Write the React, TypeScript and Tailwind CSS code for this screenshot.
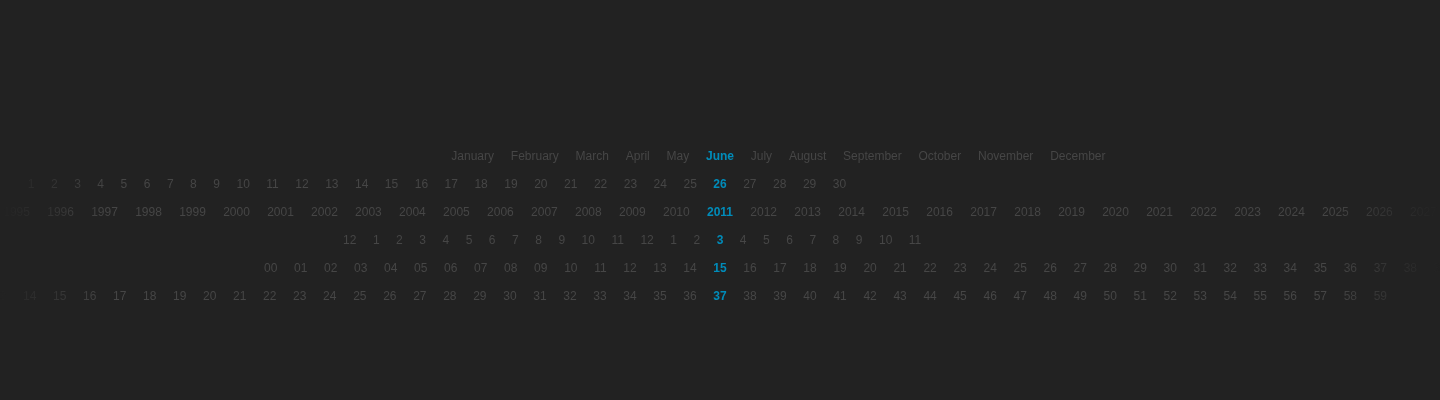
import React from "react";

type Row = { before: string[]; active: string; after: string[]; pad: string };

const pad = (n: number) => (n < 10 ? "0" + n : String(n));
const range = (a: number, b: number) => {
  const r: number[] = [];
  for (let i = a; i <= b; i++) r.push(i);
  return r;
};

const months = [
  "January",
  "February",
  "March",
  "April",
  "May",
  "June",
  "July",
  "August",
  "September",
  "October",
  "November",
  "December",
];

const hours = [12, ...range(1, 11), 12, ...range(1, 11)].map(String);

const rows: Row[] = [
  { before: months.slice(0, 5), active: "June", after: months.slice(6), pad: "px-[8.4px]" },
  {
    before: range(1, 25).map(String),
    active: "26",
    after: range(27, 30).map(String),
    pad: "px-[8.25px]",
  },
  {
    before: range(1985, 2010).map(String),
    active: "2011",
    after: range(2012, 2040).map(String),
    pad: "px-[8.65px]",
  },
  { before: hours.slice(0, 15), active: "3", after: hours.slice(16), pad: "px-[8.25px]" },
  {
    before: range(0, 14).map(pad),
    active: "15",
    after: range(16, 59).map(pad),
    pad: "px-[8.33px]",
  },
  {
    before: range(0, 36).map(pad),
    active: "37",
    after: range(38, 59).map(pad),
    pad: "px-[8.33px]",
  },
];

function Item({ label, active, p }: { label: string; active?: boolean; p: string }) {
  return (
    <span
      className={
        (active ? "font-bold text-[#008cba] " : "text-[#464646] ") + "shrink-0 " + p
      }
    >
      {label}
    </span>
  );
}

export default function App() {
  return (
    <div
      className="h-[400px] w-full overflow-hidden bg-[#222222] pt-[142px] text-[12px] leading-[28px]"
      style={{ fontFamily: '"Liberation Sans", Arial, Helvetica, sans-serif' }}
    >
      <div className="flex flex-col [mask-image:linear-gradient(to_right,transparent_0px,black_110px,black_calc(100%-110px),transparent_100%)]">
        {rows.map((row, i) => (
          <div
            key={i}
            className="grid h-[28px] grid-cols-[minmax(0,1fr)_auto_minmax(0,1fr)] whitespace-nowrap"
          >
            <div className="flex justify-end overflow-hidden">
              {row.before.map((b, j) => (
                <Item key={j} label={b} p={row.pad} />
              ))}
            </div>
            <Item label={row.active} active p={row.pad} />
            <div className="flex justify-start overflow-hidden">
              {row.after.map((b, j) => (
                <Item key={j} label={b} p={row.pad} />
              ))}
            </div>
          </div>
        ))}
      </div>
    </div>
  );
}
